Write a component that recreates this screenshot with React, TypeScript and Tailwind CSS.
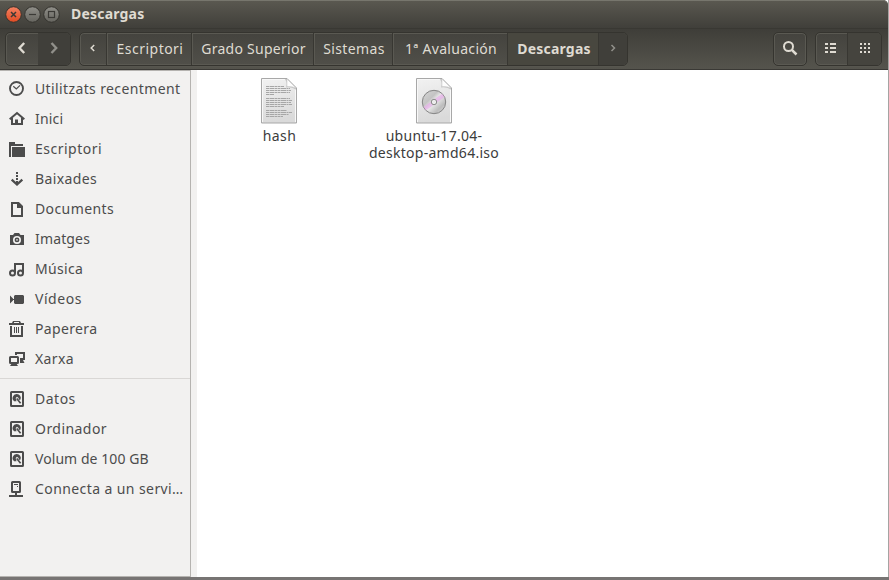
import type { ReactNode } from 'react';

const glyphs: Record<string, ReactNode> = {
  clock: (
    <g fill="none" stroke="currentColor">
      <circle cx="7.5" cy="7.5" r="6.5" strokeWidth="1.9" />
      <path d="M4.3 5.3 L7.3 8 L11 4.3" strokeWidth="1.2" />
    </g>
  ),
  home: (
    <g>
      <path d="M0.7 8.3 L8 2 L15.3 8.3 M3 7 V13 H13 V7" fill="none" stroke="currentColor" strokeWidth="2" />
      <path d="M6 13 V8.5 H9 V13 Z" fill="currentColor" />
    </g>
  ),
  folder: (
    <g fill="currentColor">
      <path d="M0 1 H6 V3 H14 V5 H2 V16 H0 Z" />
      <path d="M3 6 H16 V16 H3 Z" />
    </g>
  ),
  download: (
    <g>
      <path d="M7 1 H9 V3 H7 Z M7 4 H9 V6 H7 Z M7 7 H9 V9 H7 Z M7 10 H9 V13 H7 Z" fill="currentColor" />
      <path d="M2.7 8.6 L8 13.5 L13.3 8.6" fill="none" stroke="currentColor" strokeWidth="2.3" />
    </g>
  ),
  document: (
    <g>
      <path d="M3 2 H9.5 L13 5.5 V15 H3 Z" fill="none" stroke="currentColor" strokeWidth="2" />
      <path d="M8 2 H10 L13 5 V7 H8 Z" fill="currentColor" />
    </g>
  ),
  camera: (
    <g>
      <path
        fillRule="evenodd"
        fill="currentColor"
        d="M1 4 H4 L5.5 2 H10 L11.5 4 H15 V14 H1 Z M8 4.9 A4 4 0 1 0 8 12.9 A4 4 0 1 0 8 4.9 Z"
      />
      <circle cx="8" cy="8.9" r="1.6" fill="none" stroke="currentColor" strokeWidth="1.6" />
    </g>
  ),
  music: (
    <g fill="none" stroke="currentColor">
      <path d="M6 12 V3 H14 V12" strokeWidth="2" />
      <circle cx="3.5" cy="12" r="2.5" strokeWidth="2" />
      <circle cx="11.5" cy="12" r="2.5" strokeWidth="2" />
    </g>
  ),
  video: (
    <path
      d="M1 4.5 L4 7.5 V8 H5 V5 L6 4 H14 L15 5 V12 L14 13 H6 L5 12 V9 H4 V9.5 L1 12.5 Z"
      fill="currentColor"
    />
  ),
  trash: (
    <g>
      <path d="M0 2 H3 L4 0 H11 L12 2 H15 V4 H0 Z" fill="currentColor" />
      <path d="M5 1.5 H10" stroke="#f2f1f0" />
      <path d="M2 5 V15 H13 V5" fill="none" stroke="currentColor" strokeWidth="2" />
      <path d="M5.5 6 V12 M7.5 6 V12 M9.5 6 V12" stroke="currentColor" />
    </g>
  ),
  network: (
    <g>
      <path d="M7 4 V2 H15 V8 H11" fill="none" stroke="currentColor" strokeWidth="2" />
      <path d="M11 9 H14 L15.5 12 H11 Z M3 12 H7 L9 15 H1 Z" fill="currentColor" />
      <rect x="1" y="6" width="8" height="6" rx=".5" fill="none" stroke="currentColor" strokeWidth="2" />
    </g>
  ),
  drive: (
    <g>
      <rect x="2" y="1" width="12" height="14" rx=".6" fill="none" stroke="currentColor" strokeWidth="2" />
      <path
        d="M7.8 3 A4 4 0 0 0 5.2 10.2 L7.5 10.3 L6.7 7 L8 5.8 L9.6 7 L9.8 9 L11.5 8.5 A4 4 0 0 0 7.8 3 Z"
        fill="currentColor"
      />
      <path d="M7.7 7.5 L11.6 12.3" stroke="currentColor" strokeWidth="1.7" />
    </g>
  ),
  server: (
    <g>
      <rect x="3" y="1" width="8" height="10" rx=".5" fill="none" stroke="currentColor" strokeWidth="2" />
      <path d="M5 3 H9 V4 H5 Z M8 5 H9 V6 H8 Z M6 11 H8 V14 H14 V16 H0 V14 H6 Z" fill="currentColor" />
    </g>
  ),
};

type Place = { icon: string; label: string; tracking: string };

const places: Place[] = [
  { icon: 'clock', label: 'Utilitzats recentment', tracking: 'tracking-[0.38px]' },
  { icon: 'home', label: 'Inici', tracking: 'tracking-[0.2px]' },
  { icon: 'folder', label: 'Escriptori', tracking: 'tracking-[0.5px]' },
  { icon: 'download', label: 'Baixades', tracking: 'tracking-[0.37px]' },
  { icon: 'document', label: 'Documents', tracking: 'tracking-[0.4px]' },
  { icon: 'camera', label: 'Imatges', tracking: 'tracking-[0.15px]' },
  { icon: 'music', label: 'Música', tracking: 'tracking-[0.33px]' },
  { icon: 'video', label: 'Vídeos', tracking: 'tracking-[0.55px]' },
  { icon: 'trash', label: 'Paperera', tracking: 'tracking-[0.35px]' },
  { icon: 'network', label: 'Xarxa', tracking: 'tracking-[0.4px]' },
];

const devices: Place[] = [
  { icon: 'drive', label: 'Datos', tracking: 'tracking-[0.5px]' },
  { icon: 'drive', label: 'Ordinador', tracking: 'tracking-[0.45px]' },
  { icon: 'drive', label: 'Volum de 100 GB', tracking: 'tracking-[0.06px]' },
  { icon: 'server', label: 'Connecta a un servi…', tracking: 'tracking-[0.41px]' },
];

function PlaceRow({ icon, label, tracking }: Place) {
  return (
    <li className="flex h-[30px] items-center gap-[10px] pl-[9px]">
      <svg className="size-4 shrink-0" viewBox="0 0 16 16">{glyphs[icon]}</svg>
      <span className={`whitespace-nowrap pb-0.5 ${tracking}`}>{label}</span>
    </li>
  );
}

const frame =
  'flex h-[34px] rounded-[5px] border border-[#35342f] shadow-[inset_0_0_0_1px_#5a5952,0_1px_0_#57564f] bg-linear-to-b from-[#44433e] to-[#504f49] overflow-hidden';

function Crumb({ width, tracking, children }: { width: string; tracking: string; children: string }) {
  return (
    <button
      className={`${width} ${tracking} flex items-center justify-center whitespace-nowrap border-r border-r-[#383732] pb-0.5 pl-0.5 shadow-[inset_1px_0_0_#5a5952]`}
    >
      {children}
    </button>
  );
}

function Chevron({ d, faded, small }: { d: string; faded?: boolean; small?: boolean }) {
  return (
    <svg className={`mb-0.5 size-4 ${faded ? 'text-[#91908a]' : 'text-[#dfdbd2]'}`} viewBox="0 0 16 16">
      <path d={d} fill="none" stroke="currentColor" strokeWidth={small ? 1.5 : 2.4} />
    </svg>
  );
}

function WindowButtons() {
  return (
    <svg className="h-[18px] w-[56px] shrink-0" viewBox="0 0 56 18">
      <defs>
        <linearGradient id="close" x2="0" y2="1">
          <stop stopColor="#f58262" />
          <stop offset="1" stopColor="#df4b23" />
        </linearGradient>
        <linearGradient id="plain" x2="0" y2="1">
          <stop stopColor="#91908a" />
          <stop offset="1" stopColor="#65645e" />
        </linearGradient>
      </defs>
      <circle cx="9.5" cy="8.5" r="7.8" fill="url(#close)" stroke="#34332e" />
      <circle cx="28.5" cy="8.5" r="7.8" fill="url(#plain)" stroke="#34332e" />
      <circle cx="47.5" cy="8.5" r="7.8" fill="url(#plain)" stroke="#34332e" />
      <g fill="none" stroke="#3b3a36" strokeWidth="1.2">
        <path d="M7 6 L12 11 M12 6 L7 11" strokeWidth="1.5" />
        <path d="M25 8.5 H32" />
        <rect x="44.5" y="5.5" width="6" height="6" />
      </g>
    </svg>
  );
}

function Sheet({ id, children }: { id: string; children: ReactNode }) {
  return (
    <svg className="h-[46px] w-9" viewBox="0 0 36 46">
      <defs>
        <linearGradient id={id} x1="0" y1="0" x2="0.2" y2="1">
          <stop stopColor="#f2f2f2" />
          <stop offset="1" stopColor="#dadada" />
        </linearGradient>
      </defs>
      <path d="M.5 .5 H26 L35.5 10 V45 H.5 Z" fill={`url(#${id})`} stroke="#a8a8a8" />
      <path d="M1.5 44 V1.5 H25 M34.5 11 V44" fill="none" stroke="#f8f8f8" />
      <path d="M23.5 .5 H26 L35.5 10 V12 Q31 8.5 25 9.5 Q27 5 23.5 .5 Z" fill="#a9a9a9" opacity=".55" />
      <path d="M26 1 L35 10 Q31 8 26 8.5 Z" fill="#fdfdfd" stroke="#c6c6c6" strokeWidth=".5" />
      {children}
    </svg>
  );
}

const textLines: [number, number][] = [
  [8.5, 18], [10.5, 24], [12.5, 25], [14.5, 24], [16.5, 8],
  [20.5, 24], [22.5, 26], [24.5, 25], [26.5, 26], [28.5, 18],
  [32.5, 21], [34.5, 26], [36.5, 23], [38.5, 17],
];

export default function App() {
  return (
    <div className="flex h-[580px] w-[889px] flex-col overflow-hidden bg-linear-to-b from-[#666461] to-[#777473] font-['Noto_Sans','Open_Sans',sans-serif] text-[14px] leading-[17px]">
      <div className="flex h-[577px] flex-col border-r border-r-[#a5a4a2] bg-white">
        <header className="flex h-[70px] shrink-0 flex-col rounded-tr-[5px] border-b border-b-[#3a3935] bg-[#494843] text-[#dfdbd2]">
          <div className="flex h-7 items-center gap-[11px] rounded-tr-[5px] border-t border-t-[#77766d] bg-linear-to-b from-[#5a5850] to-[#403f3a] pl-1">
            <WindowButtons />
            <h1 className="pb-0.5 text-[14px] font-bold tracking-[0.2px]">Descargas</h1>
          </div>
          <div className="flex h-[41px] items-start border-t border-t-[#393833] bg-linear-to-b from-[#3f3e39] to-[#55544d] pl-[5px] pr-[6px] pt-[3px]">
            <div className={`${frame} w-[66px]`}>
              <button className="flex w-8 items-center justify-center">
                <Chevron d="M10.2 3 L5.5 8 L10.2 13" />
              </button>
              <button className="flex flex-1 items-center justify-center bg-[#403f3a]">
                <Chevron d="M5.5 3 L10.2 8 L5.5 13" faded />
              </button>
            </div>
            <nav className={`${frame} ml-2 w-[549px]`}>
              <button className="flex w-[27px] items-center justify-center border-r border-r-[#383732]">
                <Chevron d="M9.2 5 L6.2 8 L9.2 11" small />
              </button>
              <Crumb width="w-[85px]" tracking="tracking-[0.48px]">Escriptori</Crumb>
              <Crumb width="w-[122px]" tracking="tracking-[0.26px]">Grado Superior</Crumb>
              <Crumb width="w-[79px]" tracking="tracking-[0.38px]">Sistemas</Crumb>
              <Crumb width="w-[115px]" tracking="tracking-[0.3px]">1ª Avaluación</Crumb>
              <button className="flex w-[91px] items-center justify-center border-r border-r-[#383732] bg-[#48473f] pb-0.5 pl-0.5 font-bold tracking-[0.2px]">
                Descargas
              </button>
              <button className="flex flex-1 items-center justify-center bg-[#403f3a]">
                <Chevron d="M6.5 5 L9.5 8 L6.5 11" faded small />
              </button>
            </nav>
            <button className={`${frame} ml-auto w-[34px] items-center justify-center`}>
              <svg className="mb-0.5 size-4" viewBox="0 0 16 16" fill="none" stroke="currentColor">
                <circle cx="6.5" cy="6.5" r="4.5" strokeWidth="2" />
                <path d="M9.8 9.8 L14.5 14.5" strokeWidth="2.5" />
              </svg>
            </button>
            <div className={`${frame} ml-2 w-[67px]`}>
              <button className="flex w-8 items-center justify-center border-r border-r-[#383732]">
                <svg className="mb-0.5 size-4" viewBox="0 0 16 16" fill="currentColor" shapeRendering="crispEdges">
                  <path d="M1 3h3v2H1zM6 3h6v2H6zM1 7h3v2H1zM6 7h6v2H6zM1 11h3v2H1zM6 11h6v2H6z" />
                </svg>
              </button>
              <button className="flex flex-1 items-center justify-center bg-[#45443e]">
                <svg className="mb-0.5 size-4" viewBox="0 0 16 16" fill="currentColor" shapeRendering="crispEdges">
                  <path d="M3 3h2v2H3zM7 3h2v2H7zM11 3h2v2h-2zM3 7h2v2H3zM7 7h2v2H7zM11 7h2v2h-2zM3 11h2v2H3zM7 11h2v2H7zM11 11h2v2h-2z" />
                </svg>
              </button>
            </div>
          </div>
        </header>
        <div className="flex min-h-0 flex-1">
          <aside className="w-[191px] shrink-0 border border-l-0 border-[#b5b3b0] bg-[#f2f1f0] pt-[3px] text-[#4c4c4c]">
            <ul>{places.map((p) => <PlaceRow key={p.label} {...p} />)}</ul>
            <hr className="mb-[5px] mt-1 border-[#d9d7d5]" />
            <ul>{devices.map((p) => <PlaceRow key={p.label} {...p} />)}</ul>
          </aside>
          <div className="w-[6px] shrink-0 bg-[#f2f1f0]" />
          <main className="flex items-start pl-1 pt-2 text-[#3c3c3c]">
            <figure className="flex w-[155px] flex-col items-center gap-[3px]">
              <Sheet id="paper">
                {textLines.map(([y, w]) => (
                  <path key={y} d={`M5 ${y} h${w}`} stroke="#a6a6a6" strokeDasharray="3 .5 5 .5 2 .5" />
                ))}
              </Sheet>
              <figcaption className="pl-0.5 tracking-[0.4px]">hash</figcaption>
            </figure>
            <figure className="flex w-[155px] flex-col items-center gap-[3px] text-center">
              <Sheet id="discpaper">
                <defs>
                  <linearGradient id="disc" x2="1" y2="1">
                    <stop stopColor="#d8d8d8" />
                    <stop offset=".35" stopColor="#c3c3c3" />
                    <stop offset=".5" stopColor="#eeeeee" />
                    <stop offset=".75" stopColor="#bdbdbd" />
                    <stop offset="1" stopColor="#dedede" />
                  </linearGradient>
                </defs>
                <circle cx="18" cy="24" r="11.7" fill="url(#disc)" stroke="#858585" />
                <path d="M7.5 29 L10 32.3 L28.5 19 L26 15.7 Z" fill="#e5a9e8" opacity=".65" />
                <circle cx="18" cy="24" r="2.7" fill="#ededed" stroke="#8c8c8c" />
              </Sheet>
              <figcaption className="pl-px tracking-[0.28px]">ubuntu-17.04-<br />desktop-amd64.iso</figcaption>
            </figure>
          </main>
        </div>
      </div>
    </div>
  );
}
